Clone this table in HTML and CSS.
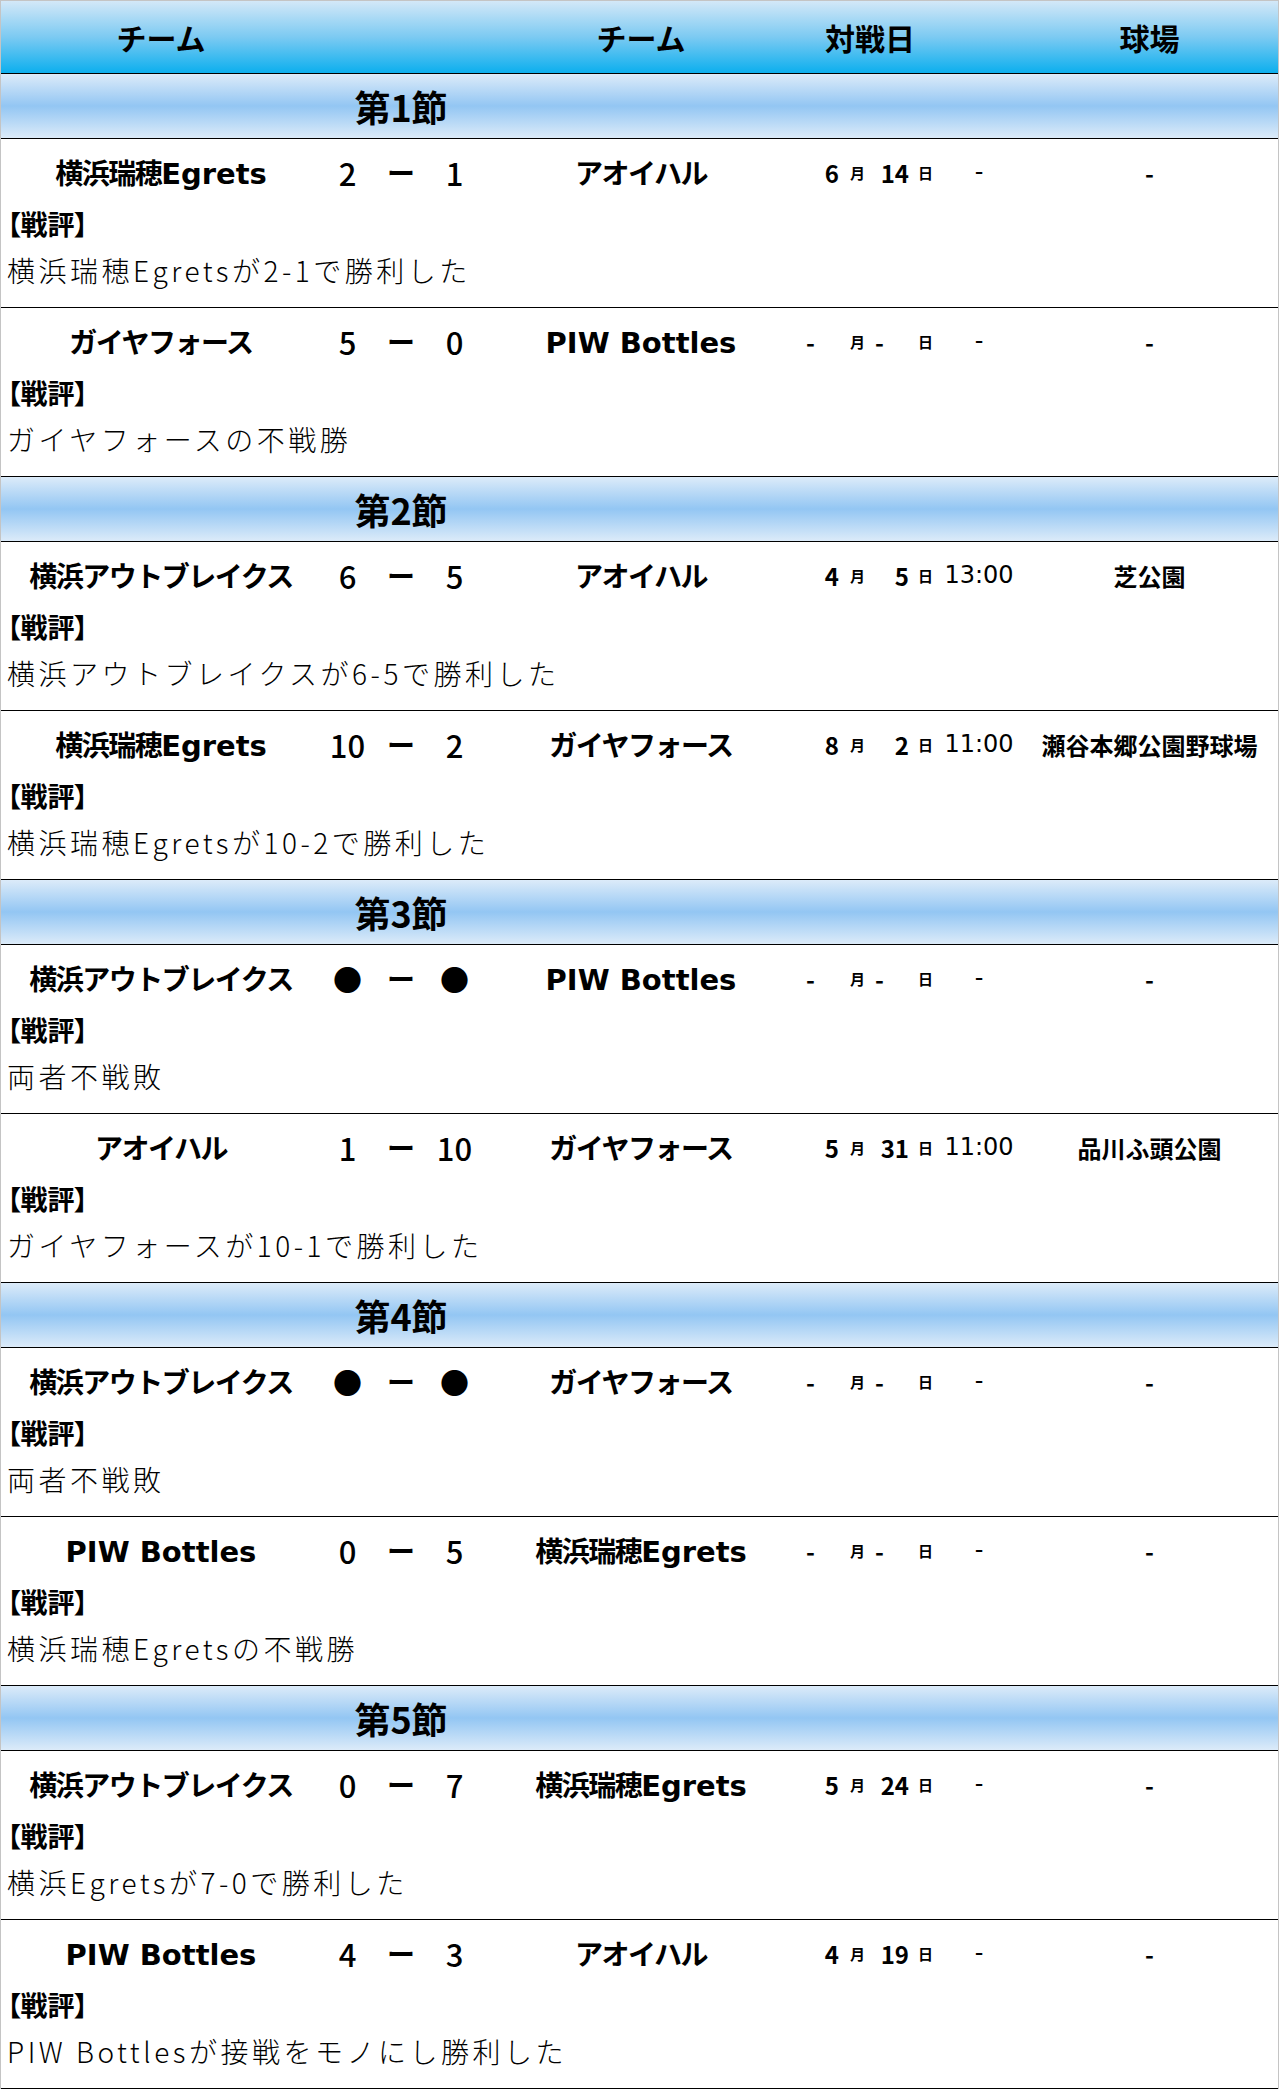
FILE: index.html
```html
<!doctype html>
<html lang="ja">
<head>
	<meta charset="UTF-8">
	<title>対戦結果</title>
	<link rel="stylesheet" href="styles.css">
</head>
<body>
	<div class="schedule">

		<div class="head">
			<div>チーム</div>
			<div></div>
			<div>チーム</div>
			<div class="head_date">対戦日</div>
			<div>球場</div>
		</div>

		<!-- 第1節 -->
		<div class="round"><span class="round_title">第1節</span></div>
		<div class="match">
			<div class="line">
				<div class="team">横浜瑞穂<span class="en">Egrets</span></div>
				<div class="pt">2</div><div class="dash">ー</div><div class="pt">1</div>
				<div class="team">アオイハル</div>
				<div class="when"><span class="mon">6</span><span class="u_mon">月</span><span class="day">14</span><span class="u_day">日</span><span class="time">-</span></div>
				<div class="place">-</div>
			</div>
			<div class="label">【戦評】</div>
			<p class="review">横浜瑞穂Egretsが2-1で勝利した</p>
		</div>
		<div class="match">
			<div class="line">
				<div class="team">ガイヤフォース</div>
				<div class="pt">5</div><div class="dash">ー</div><div class="pt">0</div>
				<div class="team"><span class="en">PIW Bottles</span></div>
				<div class="when"><span class="mon blank">-</span><span class="u_mon">月</span><span class="day blank">-</span><span class="u_day">日</span><span class="time">-</span></div>
				<div class="place">-</div>
			</div>
			<div class="label">【戦評】</div>
			<p class="review">ガイヤフォースの不戦勝</p>
		</div>

		<!-- 第2節 -->
		<div class="round"><span class="round_title">第2節</span></div>
		<div class="match">
			<div class="line">
				<div class="team">横浜アウトブレイクス</div>
				<div class="pt">6</div><div class="dash">ー</div><div class="pt">5</div>
				<div class="team">アオイハル</div>
				<div class="when"><span class="mon">4</span><span class="u_mon">月</span><span class="day">5</span><span class="u_day">日</span><span class="time">13:00</span></div>
				<div class="place">芝公園</div>
			</div>
			<div class="label">【戦評】</div>
			<p class="review">横浜アウトブレイクスが6-5で勝利した</p>
		</div>
		<div class="match">
			<div class="line">
				<div class="team">横浜瑞穂<span class="en">Egrets</span></div>
				<div class="pt">10</div><div class="dash">ー</div><div class="pt">2</div>
				<div class="team">ガイヤフォース</div>
				<div class="when"><span class="mon">8</span><span class="u_mon">月</span><span class="day">2</span><span class="u_day">日</span><span class="time">11:00</span></div>
				<div class="place">瀬谷本郷公園野球場</div>
			</div>
			<div class="label">【戦評】</div>
			<p class="review">横浜瑞穂Egretsが10-2で勝利した</p>
		</div>

		<!-- 第3節 -->
		<div class="round"><span class="round_title">第3節</span></div>
		<div class="match">
			<div class="line">
				<div class="team">横浜アウトブレイクス</div>
				<div class="pt mark">●</div><div class="dash">ー</div><div class="pt mark">●</div>
				<div class="team"><span class="en">PIW Bottles</span></div>
				<div class="when"><span class="mon blank">-</span><span class="u_mon">月</span><span class="day blank">-</span><span class="u_day">日</span><span class="time">-</span></div>
				<div class="place">-</div>
			</div>
			<div class="label">【戦評】</div>
			<p class="review">両者不戦敗</p>
		</div>
		<div class="match">
			<div class="line">
				<div class="team">アオイハル</div>
				<div class="pt">1</div><div class="dash">ー</div><div class="pt">10</div>
				<div class="team">ガイヤフォース</div>
				<div class="when"><span class="mon">5</span><span class="u_mon">月</span><span class="day">31</span><span class="u_day">日</span><span class="time">11:00</span></div>
				<div class="place">品川ふ頭公園</div>
			</div>
			<div class="label">【戦評】</div>
			<p class="review">ガイヤフォースが10-1で勝利した</p>
		</div>

		<!-- 第4節 -->
		<div class="round"><span class="round_title">第4節</span></div>
		<div class="match">
			<div class="line">
				<div class="team">横浜アウトブレイクス</div>
				<div class="pt mark">●</div><div class="dash">ー</div><div class="pt mark">●</div>
				<div class="team">ガイヤフォース</div>
				<div class="when"><span class="mon blank">-</span><span class="u_mon">月</span><span class="day blank">-</span><span class="u_day">日</span><span class="time">-</span></div>
				<div class="place">-</div>
			</div>
			<div class="label">【戦評】</div>
			<p class="review">両者不戦敗</p>
		</div>
		<div class="match">
			<div class="line">
				<div class="team"><span class="en">PIW Bottles</span></div>
				<div class="pt">0</div><div class="dash">ー</div><div class="pt">5</div>
				<div class="team">横浜瑞穂<span class="en">Egrets</span></div>
				<div class="when"><span class="mon blank">-</span><span class="u_mon">月</span><span class="day blank">-</span><span class="u_day">日</span><span class="time">-</span></div>
				<div class="place">-</div>
			</div>
			<div class="label">【戦評】</div>
			<p class="review">横浜瑞穂Egretsの不戦勝</p>
		</div>

		<!-- 第5節 -->
		<div class="round"><span class="round_title">第5節</span></div>
		<div class="match">
			<div class="line">
				<div class="team">横浜アウトブレイクス</div>
				<div class="pt">0</div><div class="dash">ー</div><div class="pt">7</div>
				<div class="team">横浜瑞穂<span class="en">Egrets</span></div>
				<div class="when"><span class="mon">5</span><span class="u_mon">月</span><span class="day">24</span><span class="u_day">日</span><span class="time">-</span></div>
				<div class="place">-</div>
			</div>
			<div class="label">【戦評】</div>
			<p class="review">横浜Egretsが7-0で勝利した</p>
		</div>
		<div class="match">
			<div class="line">
				<div class="team"><span class="en">PIW Bottles</span></div>
				<div class="pt">4</div><div class="dash">ー</div><div class="pt">3</div>
				<div class="team">アオイハル</div>
				<div class="when"><span class="mon">4</span><span class="u_mon">月</span><span class="day">19</span><span class="u_day">日</span><span class="time">-</span></div>
				<div class="place">-</div>
			</div>
			<div class="label">【戦評】</div>
			<p class="review">PIW Bottlesが接戦をモノにし勝利した</p>
		</div>

	</div>
</body>
</html>
```

FILE: styles.css
```css
*{
	padding: 0;
	margin: 0;
}
body{
	font-family: "Noto Sans CJK JP", sans-serif;
	color: #000;
	background: #fff;
}

.schedule{
	width: 1279px;
	box-sizing: border-box;
	border: 1px solid #c4c4c4;
	border-bottom: 0;
}

/* 見出し */
.head{
	display: grid;
	grid-template-columns: 320px 160px 320px 220px 1fr;
	align-items: center;
	height: 72px;
	border-bottom: 1px solid #000;
	background: linear-gradient(#d3e8f8, #7ccaf2 50%, #0cafee);
	font-size: 30px;
	font-weight: 700;
	text-align: center;
}
.head_date{
	padding-right: 82px;
}

/* 節 */
.round{
	display: flex;
	align-items: center;
	height: 64px;
	border-bottom: 1px solid #000;
	background: linear-gradient(#dcebf9, #93c6f3 50%, #dcebf9);
}
.round_title{
	width: 800px;
	text-align: center;
	font-size: 36px;
	font-weight: 700;
	line-height: 1;
}

/* 試合 */
.match{
	height: 168px;
	border-bottom: 1px solid #000;
}
.line{
	display: grid;
	grid-template-columns: 320px 53px 54px 53px 320px 220px 1fr;
	align-items: center;
	height: 66px;
}
.team{
	text-align: center;
	font-size: 28px;
	font-weight: 700;
	letter-spacing: -1.5px;
}
.team .en{
	font-family: "DejaVu Sans", sans-serif;
	font-size: 29px;
	letter-spacing: 0;
}
.pt,.dash{
	text-align: center;
	font-size: 31px;
	font-weight: 500;
}
.dash{
	font-size: 28px;
	font-weight: 700;
}
.pt.mark{
	font-size: 29px;
}

.when{
	display: grid;
	grid-template-columns: 38px 36px 34px 32px 76px;
	align-items: center;
}
.mon,.day{
	text-align: right;
	font-size: 24px;
	font-weight: 700;
}
.mon.blank{
	text-align: left;
	padding-left: 5px;
}
.day.blank{
	text-align: left;
}
.u_mon,.u_day{
	font-size: 15px;
	font-weight: 700;
}
.u_mon{
	padding-left: 11px;
}
.u_day{
	padding-left: 9px;
}
.time{
	text-align: center;
	font-family: "DejaVu Sans", sans-serif;
	font-size: 24px;
}
.place{
	text-align: center;
	font-size: 24px;
	font-weight: 700;
}

/* 戦評 */
.label{
	height: 26px;
	line-height: 26px;
	margin-top: 6px;
	padding-left: 6px;
	font-size: 27px;
	font-weight: 700;
	font-feature-settings: "palt";
}
.review{
	margin-top: 12px;
	padding-left: 6px;
	font-size: 28px;
	font-weight: 300;
	letter-spacing: 3.5px;
	line-height: 42px;
}
```
